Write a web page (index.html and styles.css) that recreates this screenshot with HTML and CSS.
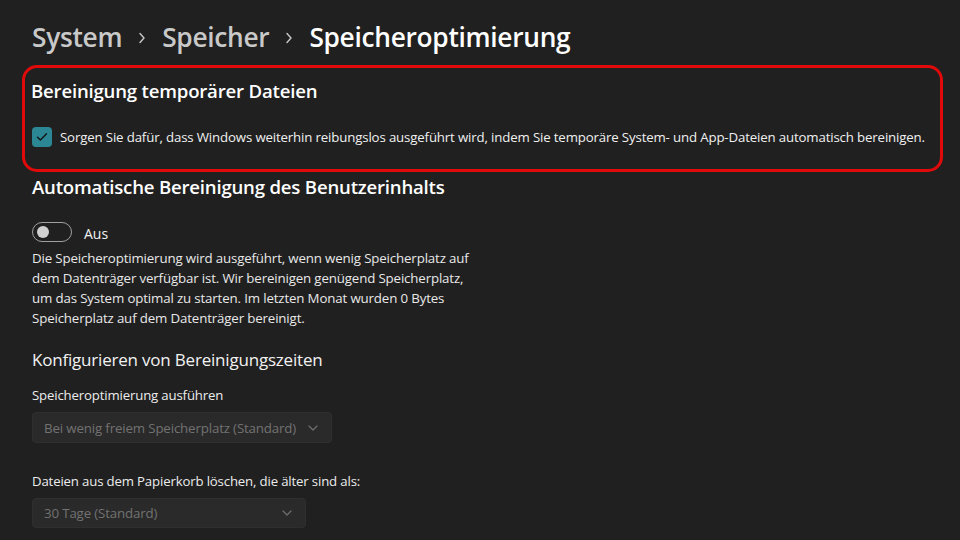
FILE: index.html
```html
<!DOCTYPE html>
<html lang="de">
<head>
<meta charset="utf-8">
<title>Speicheroptimierung</title>
<link rel="stylesheet" href="styles.css">
</head>
<body>
<main class="page">
  <h1 class="breadcrumb">
    <span class="crumb">System</span>
    <svg class="sep" width="8" height="12" viewBox="0 0 8 12"><path d="M2 1.5 L6 6 L2 10.5" fill="none" stroke="#c8c8c8" stroke-width="1.4" stroke-linecap="round" stroke-linejoin="round"/></svg>
    <span class="crumb">Speicher</span>
    <svg class="sep" width="8" height="12" viewBox="0 0 8 12"><path d="M2 1.5 L6 6 L2 10.5" fill="none" stroke="#c8c8c8" stroke-width="1.4" stroke-linecap="round" stroke-linejoin="round"/></svg>
    <span class="crumb current">Speicheroptimierung</span>
  </h1>

  <section class="highlight">
    <h2 class="section-title">Bereinigung temporärer Dateien</h2>
    <label class="check-row">
      <span class="checkbox">
        <svg width="12" height="10" viewBox="0 0 12 10"><path d="M1.5 5.2 L4.4 8 L10.5 1.8" fill="none" stroke="#111" stroke-width="1.3" stroke-linecap="round" stroke-linejoin="round"/></svg>
      </span>
      <span class="check-text">Sorgen Sie dafür, dass Windows weiterhin reibungslos ausgeführt wird, indem Sie temporäre System- und App-Dateien automatisch bereinigen.</span>
    </label>
  </section>

  <h2 class="section-title second">Automatische Bereinigung des Benutzerinhalts</h2>
  <div class="toggle-row">
    <span class="toggle"><span class="knob"></span></span>
    <span class="toggle-label">Aus</span>
  </div>
  <p class="desc">Die Speicheroptimierung wird ausgeführt, wenn wenig Speicherplatz auf dem Datenträger verfügbar ist. Wir bereinigen genügend Speicherplatz, um das System optimal zu starten. Im letzten Monat wurden 0 Bytes Speicherplatz auf dem Datenträger bereinigt.</p>

  <h3 class="sub-title">Konfigurieren von Bereinigungszeiten</h3>

  <div class="field">
    <div class="field-label">Speicheroptimierung ausführen</div>
    <div class="select wide">
      <span>Bei wenig freiem Speicherplatz (Standard)</span>
      <svg width="10" height="6" viewBox="0 0 10 6"><path d="M1 1 L5 5 L9 1" fill="none" stroke="#6f6f6f" stroke-width="1.2" stroke-linecap="round" stroke-linejoin="round"/></svg>
    </div>
  </div>

  <div class="field second-field">
    <div class="field-label">Dateien aus dem Papierkorb löschen, die älter sind als:</div>
    <div class="select narrow">
      <span>30 Tage (Standard)</span>
      <svg width="10" height="6" viewBox="0 0 10 6"><path d="M1 1 L5 5 L9 1" fill="none" stroke="#6f6f6f" stroke-width="1.2" stroke-linecap="round" stroke-linejoin="round"/></svg>
    </div>
  </div>
</main>
</body>
</html>
```

FILE: styles.css
```css
* { box-sizing: border-box; }
html, body {
  margin: 0;
  padding: 0;
  background: #202020;
  width: 960px;
  height: 540px;
  overflow: hidden;
}
body {
  font-family: "Segoe UI", "Open Sans", "Noto Sans", sans-serif;
  color: #ffffff;
}
.page {
  padding: 17px 32px 0 32px;
}
.breadcrumb {
  display: flex;
  align-items: center;
  gap: 16px;
  margin: 0;
  font-size: 26.3px;
  font-weight: 600;
  line-height: 40px;
  letter-spacing: -0.3px;
}
.crumb { color: #c9c9c9; }
.crumb.current { color: #ffffff; }
.sep { margin-top: 2px; }

.highlight {
  margin: 8px 0 0 -10px;
  width: 921px;
  border: 3px solid #e10a0a;
  border-radius: 15px;
  padding: 11px 6px 22px 6px;
}
.section-title {
  margin: 0;
  font-size: 18.6px;
  font-weight: 600;
  line-height: 24px;
  letter-spacing: -0.2px;
}
.check-row {
  display: flex;
  align-items: center;
  gap: 8px;
  margin: 24px 0 0 1px;
}
.checkbox {
  width: 20px;
  height: 20px;
  border-radius: 4px;
  background: #2c8795;
  display: flex;
  align-items: center;
  justify-content: center;
  flex: none;
}
.check-text {
  font-size: 13.25px;
  line-height: 20px;
  color: #f0f0f0;
  letter-spacing: -0.15px;
}
.section-title.second {
  margin-top: 3px;
}
.toggle-row {
  display: flex;
  align-items: center;
  gap: 12px;
  margin-top: 23px;
}
.toggle {
  width: 40px;
  height: 20px;
  border: 1px solid #a0a0a0;
  border-radius: 10px;
  display: flex;
  align-items: center;
  padding-left: 4px;
}
.knob {
  width: 12px;
  height: 12px;
  border-radius: 50%;
  background: #d0d0d0;
}
.toggle-label {
  font-size: 14px;
  line-height: 16px;
  height: 20px;
  padding-top: 4px;
  color: #f0f0f0;
}
.desc {
  margin: 6px 0 0 0;
  width: 450px;
  font-size: 13.3px;
  line-height: 20px;
  color: #e8e8e8;
  letter-spacing: -0.15px;
}
.sub-title {
  margin: 20px 0 0 0;
  font-size: 17px;
  font-weight: 400;
  line-height: 24px;
  color: #f2f2f2;
  letter-spacing: -0.2px;
}
.field { margin-top: 13px; }
.second-field { margin-top: 28px; }
.field-label {
  font-size: 13.2px;
  line-height: 20px;
  color: #ececec;
  letter-spacing: -0.15px;
}
.select {
  margin-top: 7px;
  height: 31px;
  border-radius: 4px;
  background: #2a2a2a;
  border: 1px solid #2f2f2f;
  display: flex;
  align-items: center;
  justify-content: space-between;
  padding: 0 13px 0 11px;
  font-size: 13.3px;
  color: #727272;
  letter-spacing: -0.15px;
}
.select.wide { width: 300px; }
.select.narrow { width: 274px; }
.second-field .select { height: 30px; }
```
